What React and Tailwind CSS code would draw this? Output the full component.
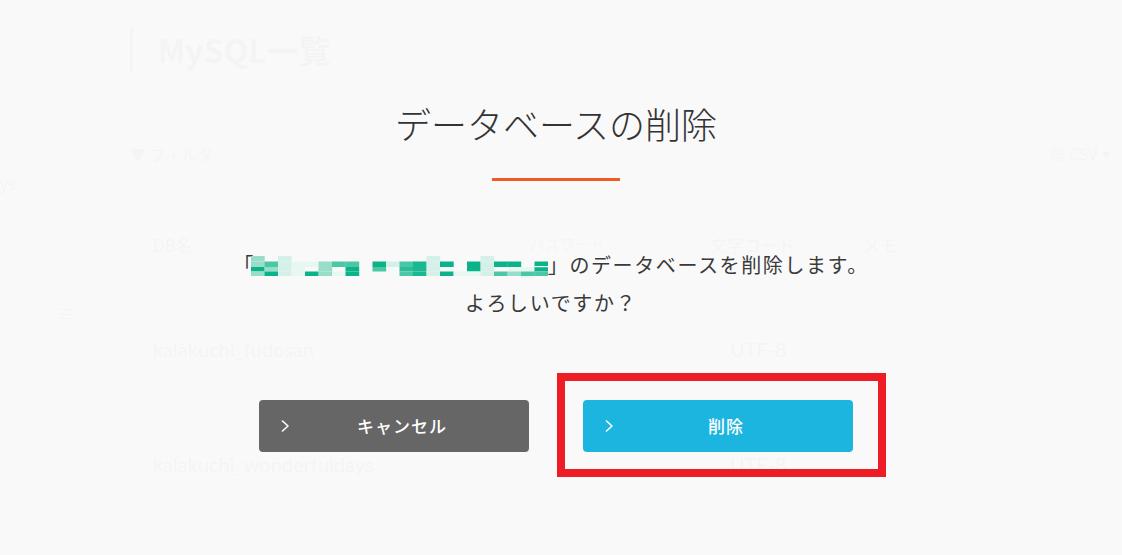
import React from "react";

const D = "#0bb388";
const M = "#4cc7a5";
const L = "#98ddca";
const P = "#d5f0e9";
const W = "#e9f7f3";
const _ = null;

// columns of 4 rows each
const mosaic = [
  [L, L, D, L],
  [_, M, L, D],
  [P, P, P, P],
  [_, W, W, W],
  [_, W, _, D],
  [_, L, L, L],
  [_, M, _, W],
  [_, M, D, D],
  [_, _, _, _],
  [_, D, M, _],
  [_, P, _, _],
  [_, M, "#2bbd95", M],
  [_, "#1ab890", "#1ab890", "#1ab890"],
  [P, P, P, P],
  [_, D, _, D],
  [_, _, _, W],
  [_, D, D, W],
  [P, P, P, P],
  [_, D, _, M],
  [_, D, W, L],
  [_, _, W, M],
  [_, D, D, M],
];
const rowY = [0, 5.5, 11, 15.5];
const rowH = [5.5, 5.5, 4.5, 4.5];

function Mosaic() {
  const cw = 13.5;
  return (
    <svg width="297" height="22" viewBox="0 0 297 22" className="ml-[-4px] inline-block align-[-5px]">
      {mosaic.map((col, ci) =>
        col.map((c, ri) =>
          c ? (
            <rect key={ci + "-" + ri} x={ci * cw} y={rowY[ri]} width={cw + 0.2} height={rowH[ri]} fill={c} />
          ) : null
        )
      )}
      <rect x={20 * cw} y={20} width={cw} height={2} fill={W} />
      <rect x={21 * cw} y={10} width={cw} height={1.2} fill="#ffffff" />
    </svg>
  );
}

function Chevron() {
  return (
    <svg width="9" height="12" viewBox="0 0 9 12" className="shrink-0">
      <path d="M1.5 1 L7 6 L1.5 11" fill="none" stroke="#ffffff" strokeWidth="1.6" strokeLinecap="round" strokeLinejoin="round" />
    </svg>
  );
}

function Button({ label, className }) {
  return (
    <div className={"flex h-[52px] w-[270px] items-center rounded-[4px] pl-[22px] pr-[15px] " + className}>
      <Chevron />
      <span className="flex-1 text-center text-[17px] font-medium tracking-[1px] text-white">{label}</span>
    </div>
  );
}

export default function App() {
  return (
    <div
      className="relative h-[555px] w-[1122px] overflow-hidden bg-[#f9f9f9] text-[#333]"
      style={{ fontFamily: '"Noto Sans", "Noto Sans CJK JP", sans-serif' }}
    >
      {/* background page (dimmed by overlay) */}
      <div className="flex h-full flex-col">
        <div className="flex items-center pl-[130px] pt-[27px]">
          <div className="h-[45px] w-[3px] bg-[#555]" />
          <div className="ml-[25px] text-[32px] font-bold leading-[45px]" style={{ fontFamily: '"Noto Sans CJK JP", sans-serif' }}>
            MySQL一覧
          </div>
        </div>
        <div className="mt-[74px] flex items-center pl-[130px] pr-[12px] text-[16px] leading-none">
          <span style={{ fontFamily: '"Noto Sans CJK JP", sans-serif' }}>▼ フィルタ</span>
          <span className="ml-auto">▦ CSV ▾</span>
        </div>
        <div className="mt-[14px] text-[16px] leading-none">ys</div>
        <div className="mt-[44px] grid grid-cols-[153px_377px_180px_153px_1fr] text-[17px] leading-none" style={{ fontFamily: '"Noto Sans CJK JP", sans-serif' }}>
          <div />
          <div>DB名</div>
          <div className="text-[15px]">パスワード</div>
          <div>文字コード</div>
          <div>メモ</div>
        </div>
        <div className="mt-[52px] pl-[57px] text-[18px] leading-none">≡</div>
        <div className="mt-[16px] grid grid-cols-[153px_577px_1fr] text-[20px] leading-none" style={{ fontFamily: 'Lato, sans-serif' }}>
          <div />
          <div>kalakuchi_fudosan</div>
          <div>UTF-8</div>
        </div>
        <div className="mt-[95px] grid grid-cols-[153px_577px_1fr] text-[20px] leading-none" style={{ fontFamily: 'Lato, sans-serif' }}>
          <div />
          <div>kalakuchi_wonderfuldays</div>
          <div>UTF-8</div>
        </div>
      </div>

      {/* modal overlay */}
      <div className="absolute inset-0 bg-[#f9f9f9]/[0.975]">
        <div
          className="flex flex-col items-center pr-[10px] pt-[96px]"
          style={{ fontFamily: '"Noto Sans CJK JP", "Noto Sans", sans-serif' }}
        >
          <h1 className="text-[36px] font-light leading-[54px] text-[#333]">データベースの削除</h1>
          <div className="mt-[28px] h-[3px] w-[128px] bg-[#f15a24]" />
          <p className="mt-[65px] pr-[10px] text-center text-[20px] leading-[38px] tracking-[1.6px] text-[#3a3a3a]">
            「<Mosaic />」のデータベースを削除します。
            <br />
            よろしいですか？
          </p>
          <div className="mt-[78px] flex gap-[54px]">
            <Button label="キャンセル" className="bg-[#666666]" />
            <div className="relative">
              <Button label="削除" className="bg-[#1bb5e0]" />
              <div className="pointer-events-none absolute left-[-26px] top-[-27px] h-[104px] w-[329px] border-[8px] border-[#ee1c25]" />
            </div>
          </div>
        </div>
      </div>
    </div>
  );
}
